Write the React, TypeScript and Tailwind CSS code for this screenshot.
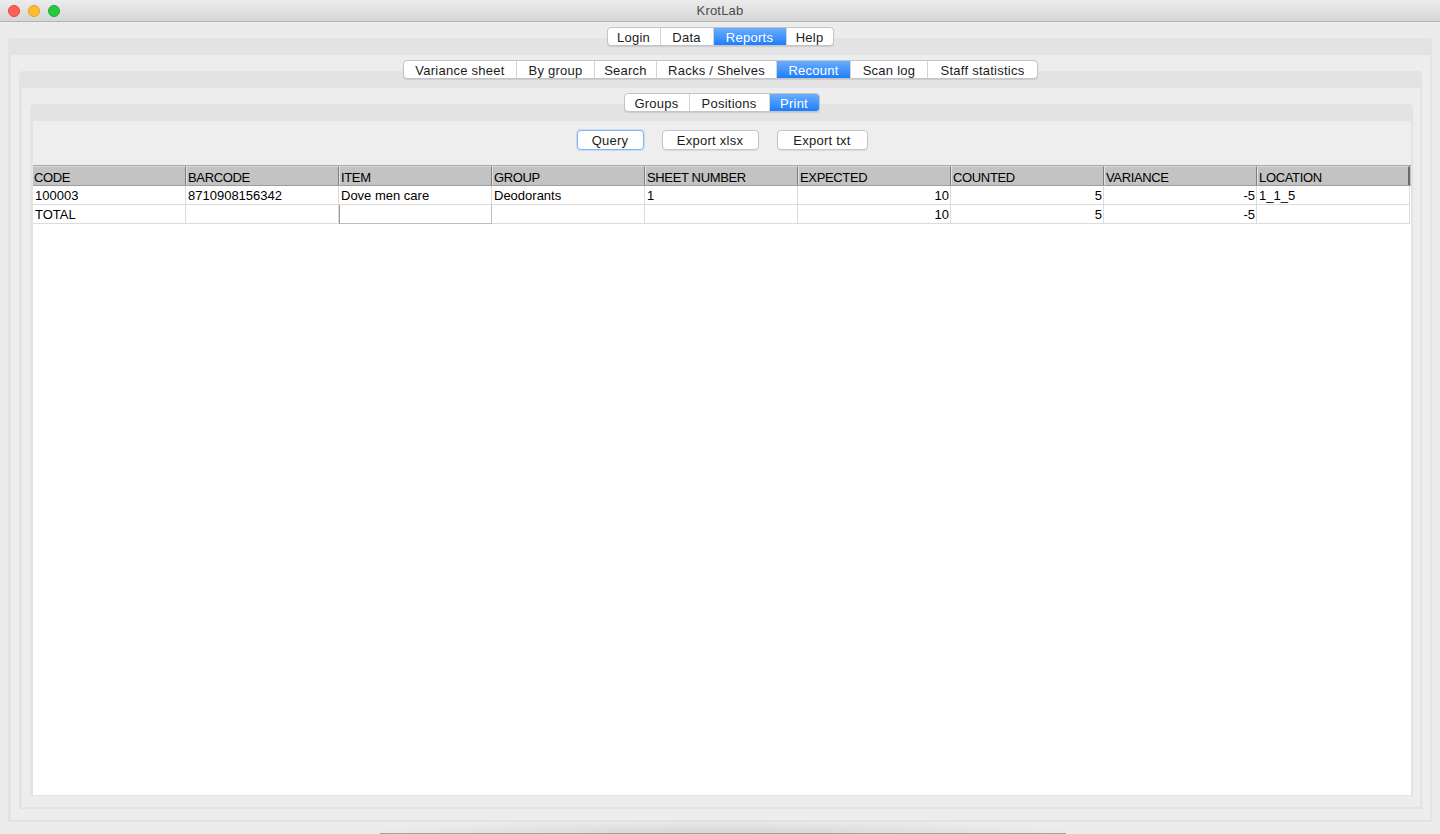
import React from "react";

type Tab = { label: string; w: string };

function TabStrip({ items, active }: { items: Tab[]; active: string }) {
  return (
    <div className="relative z-10 flex justify-center mb-[-8px]">
      <div className="flex h-[19px] rounded-[4px] border border-[#c4c4c4] bg-white shadow-[0_1px_1px_rgba(0,0,0,0.10)] overflow-hidden">
        {items.map((t, i) => {
          const sel = t.label === active;
          return (
            <div
              key={t.label}
              className={[
                "flex items-center justify-center pt-[1px] text-[13px] leading-none tracking-[0.25px]",
                t.w,
                i > 0 ? "border-l border-[#d4d4d4]" : "",
                sel
                  ? "bg-gradient-to-b from-[#69adfd] to-[#1b7dfb] text-white"
                  : "text-[#1c1c1c]",
              ].join(" ")}
            >
              {t.label}
            </div>
          );
        })}
      </div>
    </div>
  );
}

const topTabs: Tab[] = [
  { label: "Login", w: "w-[52px]" },
  { label: "Data", w: "w-[53px]" },
  { label: "Reports", w: "w-[73px]" },
  { label: "Help", w: "w-[47px]" },
];

const reportTabs: Tab[] = [
  { label: "Variance sheet", w: "w-[112px]" },
  { label: "By group", w: "w-[78px]" },
  { label: "Search", w: "w-[62px]" },
  { label: "Racks / Shelves", w: "w-[120px]" },
  { label: "Recount", w: "w-[74px]" },
  { label: "Scan log", w: "w-[77px]" },
  { label: "Staff statistics", w: "w-[110px]" },
];

const recountTabs: Tab[] = [
  { label: "Groups", w: "w-[64px]" },
  { label: "Positions", w: "w-[80px]" },
  { label: "Print", w: "w-[50px]" },
];

const columns = [
  "CODE",
  "BARCODE",
  "ITEM",
  "GROUP",
  "SHEET NUMBER",
  "EXPECTED",
  "COUNTED",
  "VARIANCE",
  "LOCATION",
];

type Cell = { v: string; right?: boolean };

const rows: Cell[][] = [
  [
    { v: "100003" },
    { v: "8710908156342" },
    { v: "Dove men care" },
    { v: "Deodorants" },
    { v: "1" },
    { v: "10", right: true },
    { v: "5", right: true },
    { v: "-5", right: true },
    { v: "1_1_5" },
  ],
  [
    { v: "TOTAL" },
    { v: "" },
    { v: "" },
    { v: "" },
    { v: "" },
    { v: "10", right: true },
    { v: "5", right: true },
    { v: "-5", right: true },
    { v: "" },
  ],
];

function Btn({ label, w, focus }: { label: string; w: string; focus?: boolean }) {
  return (
    <div
      className={[
        "h-[20px] flex items-center justify-center pt-[1px] rounded-[4px] bg-white text-[13px] leading-none tracking-[0.25px] text-[#1c1c1c]",
        w,
        focus
          ? "border border-[#84b6ee] shadow-[0_0_0_1px_rgba(132,182,238,0.35)]"
          : "border border-[#c6c6c6] shadow-[0_1px_1px_rgba(0,0,0,0.08)]",
      ].join(" ")}
    >
      {label}
    </div>
  );
}

export default function App() {
  return (
    <div
      className="relative w-[1440px] h-[834px] overflow-hidden bg-[#ececec] flex flex-col"
      style={{ fontFamily: '"Liberation Sans", Arial, sans-serif' }}
    >
      {/* Title bar */}
      <div className="relative h-[22px] shrink-0 flex items-center justify-center bg-gradient-to-b from-[#ececec] to-[#d6d6d6] border-b border-[#b4b4b4]">
        <div className="absolute left-[8px] top-[5px] flex gap-[8px]">
          <span className="w-[12px] h-[12px] rounded-full bg-[#fe5f57] border border-[#e2463f]" />
          <span className="w-[12px] h-[12px] rounded-full bg-[#febc2e] border border-[#e0a028]" />
          <span className="w-[12px] h-[12px] rounded-full bg-[#28c840] border border-[#1eaa32]" />
        </div>
        <span className="text-[13px] text-[#4d4d4d] tracking-[0.2px]">KrotLab</span>
      </div>

      {/* Window content */}
      <div className="flex-1 flex flex-col pt-[5px] pb-[12px] pl-[8px] pr-[8px]">
        <TabStrip items={topTabs} active="Reports" />
        {/* Outer panel */}
        <div className="flex-1 flex flex-col rounded-t-[4px] border-t-[17px] border-l-[3px] border-r-[2px] border-b-[2px] border-[#e3e3e3] bg-[#ededed] pt-[5px] pb-[11px] pl-[8px] pr-[8px]">
          <TabStrip items={reportTabs} active="Recount" />
          {/* Second panel */}
          <div className="flex-1 flex flex-col rounded-t-[4px] border-t-[17px] border-l-[3px] border-r-[2px] border-b-[2px] border-[#e3e3e3] bg-[#ededed] pt-[5px] pb-[11px] pl-[8px] pr-[7px]">
            <TabStrip items={recountTabs} active="Print" />
            {/* Third panel */}
            <div className="flex-1 flex flex-col rounded-t-[4px] border-t-[17px] border-l-[3px] border-r-[2px] border-b-[1px] border-[#e3e3e3] bg-[#eeeeee]">
              <div className="flex justify-center gap-[18px] pt-[9px] pb-[15px]">
                <Btn label="Query" w="w-[67px]" focus />
                <Btn label="Export xlsx" w="w-[97px]" />
                <Btn label="Export txt" w="w-[91px]" />
              </div>
              {/* Table */}
              <div className="flex-1 flex flex-col bg-white border-t border-[#a8a8a8]">
                <div className="grid grid-cols-[repeat(9,153px)] h-[20px] bg-[#c3c3c3] border-b border-[#9e9e9e]">
                  {columns.map((c, i) => (
                    <div
                      key={c}
                      className={[
                        "flex items-center pl-[1px] pt-[2px] text-[13px] leading-none tracking-[-0.35px] text-black border-t border-t-[#d8d8d8]",
                        i > 0 ? "border-l border-l-[#e2e2e2]" : "",
                        i < 8 ? "border-r border-r-[#7f7f7f]" : "border-r-2 border-r-[#6a6a6a]",
                      ].join(" ")}
                    >
                      {c}
                    </div>
                  ))}
                </div>
                {rows.map((r, ri) => (
                  <div key={ri} className="grid grid-cols-[repeat(9,153px)] h-[19px]">
                    {r.map((cell, ci) => (
                      <div
                        key={ci}
                        className={[
                          "flex items-center pt-[1px] text-[13px] leading-none text-black border-b border-r",
                          ci === 2 && ri === 1
                            ? "border-[#bdbdbd] border-l border-l-[#9a9a9a]"
                            : "border-[#dcdcdc]",
                          cell.right ? "justify-end pr-[1px]" : "pl-[2px]",
                        ].join(" ")}
                      >
                        {cell.v}
                      </div>
                    ))}
                  </div>
                ))}
              </div>
            </div>
          </div>
        </div>
      </div>

      {/* Shadow of a window behind at the bottom edge */}
      <div className="pointer-events-none absolute bottom-0 left-[340px] w-[760px] h-[14px] bg-[radial-gradient(ellipse_at_bottom,rgba(0,0,0,0.10),rgba(0,0,0,0)_70%)]" />
      <div className="pointer-events-none absolute bottom-0 left-[380px] w-[686px] h-[1px] bg-[#a3a3a3]" />
    </div>
  );
}
